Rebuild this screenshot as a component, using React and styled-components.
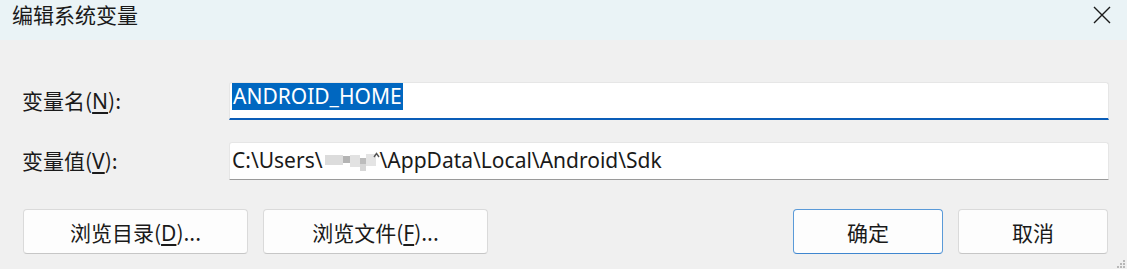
import React from 'react'
import styled, { createGlobalStyle } from 'styled-components'

const Global = createGlobalStyle`
    html, body {
        margin: 0;
        padding: 0;
        background: #f0f0f0;
    }
    body {
        font-family: "Noto Sans", "Noto Sans CJK SC", sans-serif;
        color: #1a1a1a;
    }
`

const Window = styled.div`
    position: relative;
    width: 1127px;
    height: 269px;
    display: flex;
    flex-direction: column;
    background: #f0f0f0;
    overflow: hidden;
`

const TitleBar = styled.div`
    height: 40px;
    flex: none;
    display: flex;
    justify-content: space-between;
    align-items: flex-start;
    padding: 0 16px 0 12px;
    background: #eaf3f6;
`

const Title = styled.div`
    font-size: 21px;
    line-height: 29px;
    font-family: "Noto Sans CJK SC", sans-serif;
`

const Close = styled.svg`
    margin-top: 6px;
`

const Body = styled.div`
    flex: 1;
    display: flex;
    flex-direction: column;
    padding: 42px 18px 0 22px;
`

const Form = styled.div`
    display: grid;
    grid-template-columns: 207px 1fr;
    row-gap: 22px;
    align-items: center;
`

const Label = styled.label`
    font-size: 21px;
    line-height: 29px;
    font-family: "Noto Sans CJK SC", sans-serif;
    u {
        text-decoration: underline;
        text-underline-offset: 3px;
        font-family: "Noto Sans", sans-serif;
    }
`

const Field = styled.div`
    height: 38px;
    box-sizing: border-box;
    background: #ffffff;
    border: 1px solid #e6e6e6;
    border-bottom: ${({ $focused }) => ($focused ? '2px solid #0a5db8' : '1px solid #9a9a9a')};
    border-radius: 3px 3px 0 0;
    padding: ${({ $focused }) => ($focused ? '0 2px' : '4px 2px 0')};
    font-size: 21px;
    line-height: 27px;
    white-space: nowrap;
    display: flex;
    align-items: flex-start;
`

const Selected = styled.span`
    background: #0067c0;
    color: #ffffff;
    padding: 0 1px;
`

const Blur = styled.svg`
    display: inline-block;
    margin-top: 4px;
`

const Buttons = styled.div`
    display: flex;
    margin-top: 29px;
    padding-left: 1px;
    padding-right: 1px;
`

const Group = styled.div`
    display: flex;
    gap: 15px;
`

const Spacer = styled.div`
    flex: 1;
`

const Button = styled.button`
    width: ${({ $wide }) => ($wide ? '225px' : '150px')};
    height: 45px;
    box-sizing: border-box;
    background: #fdfdfd;
    border: 1px solid ${({ $primary }) => ($primary ? '#5a9ad8' : '#dadada')};
    border-bottom-color: ${({ $primary }) => ($primary ? '#3f86cf' : '#c6c6c6')};
    border-radius: 4px;
    font-family: "Noto Sans CJK SC", sans-serif;
    font-size: 21px;
    color: #1a1a1a;
    padding: 0;
    u {
        text-decoration: underline;
        text-underline-offset: 3px;
        font-family: "Noto Sans", sans-serif;
    }
`

const Grip = styled.svg`
    position: absolute;
    right: 2px;
    bottom: 1px;
`

const Username = () => (
  <Blur width="57" height="22" viewBox="0 0 57 22">
    <rect x="2" y="4" width="18" height="10" fill="#dcdcdc" />
    <rect x="20" y="5" width="7" height="7" fill="#b4b4b4" />
    <rect x="27" y="4" width="10" height="12" fill="#e2e2e2" />
    <rect x="37" y="7" width="6" height="6" fill="#bcbcbc" />
    <rect x="37" y="13" width="6" height="7" fill="#d6d6d6" />
    <rect x="43" y="3" width="10" height="12" fill="#e4e4e4" />
    <path d="M51 6 L53.5 2.5 L56 6" fill="none" stroke="#555" strokeWidth="1.4" />
  </Blur>
)

const App = () => {
  return (
    <Window>
      <Global />
      <TitleBar>
        <Title>编辑系统变量</Title>
        <Close width="18" height="18" viewBox="0 0 18 18">
          <path d="M1 1 L17 17 M17 1 L1 17" stroke="#1a1a1a" strokeWidth="1.4" />
        </Close>
      </TitleBar>
      <Body>
        <Form>
          <Label>变量名(<u>N</u>):</Label>
          <Field $focused>
            <Selected>ANDROID_HOME</Selected>
          </Field>
          <Label>变量值(<u>V</u>):</Label>
          <Field>
            C:\Users\<Username />\AppData\Local\Android\Sdk
          </Field>
        </Form>
        <Buttons>
          <Group>
            <Button $wide>浏览目录(<u>D</u>)...</Button>
            <Button $wide>浏览文件(<u>F</u>)...</Button>
          </Group>
          <Spacer />
          <Group>
            <Button $primary>确定</Button>
            <Button>取消</Button>
          </Group>
        </Buttons>
      </Body>
      <Grip width="8" height="8" viewBox="0 0 8 8">
        <rect x="6" y="0" width="2" height="2" fill="#b8b8b8" />
        <rect x="3" y="3" width="2" height="2" fill="#b8b8b8" />
        <rect x="6" y="3" width="2" height="2" fill="#b8b8b8" />
        <rect x="0" y="6" width="2" height="2" fill="#b8b8b8" />
        <rect x="3" y="6" width="2" height="2" fill="#b8b8b8" />
        <rect x="6" y="6" width="2" height="2" fill="#b8b8b8" />
      </Grip>
    </Window>
  )
}

export default App
